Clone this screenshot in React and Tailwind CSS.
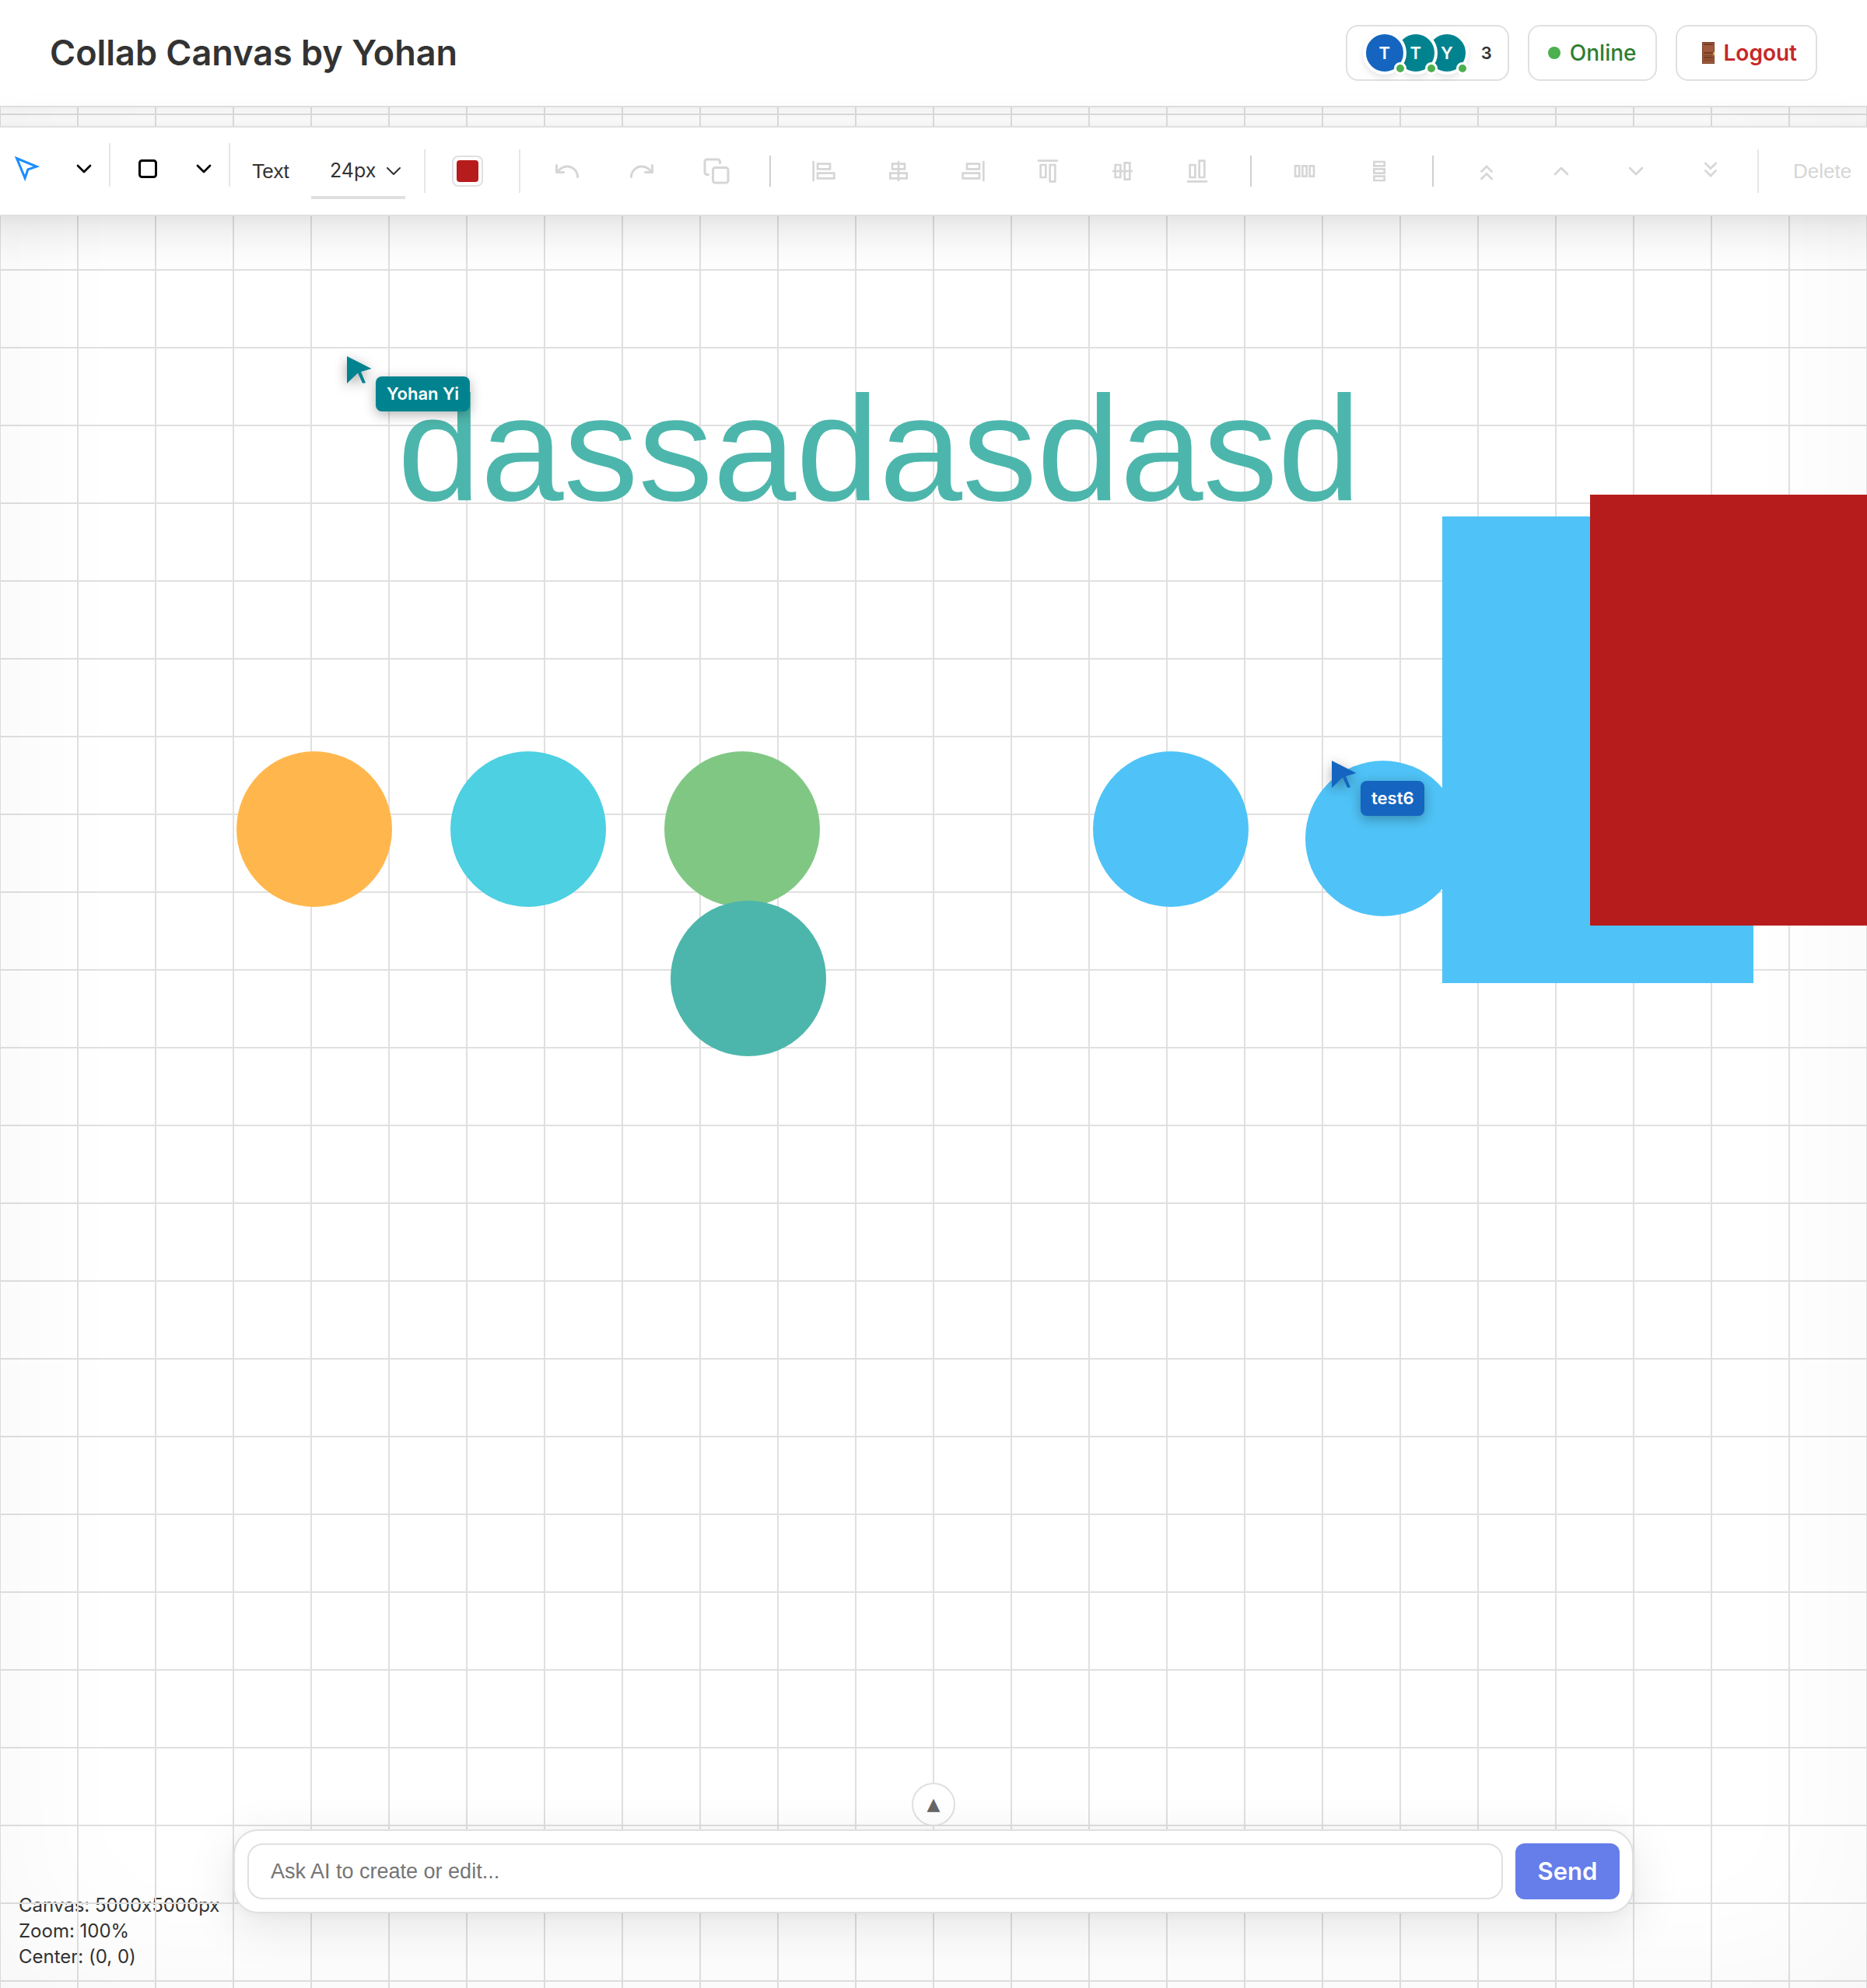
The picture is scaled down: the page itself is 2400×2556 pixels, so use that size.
import React from 'react';
import { Undo, Redo, ChevronDown, ChevronUp } from 'lucide-react';

const people = [
  { initial: 'T', color: 'bg-[#1565c0]', layer: 'z-30' },
  { initial: 'T', color: 'bg-[#00838f]', layer: 'z-20' },
  { initial: 'Y', color: 'bg-[#00838f]', layer: 'z-10' },
];

const circles = [
  { left: 304, top: 966, color: 'bg-[#ffb74d]' },
  { left: 579, top: 966, color: 'bg-[#4dd0e1]' },
  { left: 854, top: 966, color: 'bg-[#81c784]' },
  { left: 1405, top: 966, color: 'bg-[#4fc3f7]' },
  { left: 1678, top: 978, color: 'bg-[#4fc3f7]' },
  { left: 862, top: 1158, color: 'bg-[#4db6ac]' },
];

function Glyph({ children, className = 'size-8' }) {
  return (
    <svg viewBox="0 0 24 24" className={className} fill="none" stroke="currentColor" strokeWidth="2" strokeLinecap="round" strokeLinejoin="round" aria-hidden="true">
      {children}
    </svg>
  );
}

const shapes = {
  copy: (
    <Glyph className="size-9">
      <rect x="9" y="9" width="13" height="13" rx="2" />
      <path d="M5 15H4a2 2 0 0 1-2-2V4a2 2 0 0 1 2-2h9a2 2 0 0 1 2 2v1" />
    </Glyph>
  ),
  left: (
    <Glyph>
      <path d="M2 3v18" />
      <path strokeLinejoin="miter" d="M6 5h12v5H6zM6 14h16v5H6z" />
    </Glyph>
  ),
  center: (
    <Glyph>
      <path d="M12 3v18" />
      <path strokeLinejoin="miter" d="M6 5h12v5H6zM4 14h16v5H4z" />
    </Glyph>
  ),
  right: (
    <Glyph>
      <path d="M22 3v18" />
      <path strokeLinejoin="miter" d="M6 5h12v5H6zM2 14h16v5H2z" />
    </Glyph>
  ),
  top: (
    <Glyph>
      <path d="M3 2h18" />
      <path strokeLinejoin="miter" d="M5 6h5v12H5zM14 6h5v16h-5z" />
    </Glyph>
  ),
  middle: (
    <Glyph>
      <path d="M3 12h18" />
      <path strokeLinejoin="miter" d="M5 6h5v12H5zM14 4h5v16h-5z" />
    </Glyph>
  ),
  bottom: (
    <Glyph>
      <path d="M3 22h18" />
      <path strokeLinejoin="miter" d="M5 6h5v12H5zM14 2h5v16h-5z" />
    </Glyph>
  ),
  spreadX: (
    <Glyph>
      <path strokeLinejoin="miter" d="M3 7h4v10H3zM10 7h4v10h-4zM17 7h4v10h-4z" />
    </Glyph>
  ),
  spreadY: (
    <Glyph>
      <path strokeLinejoin="miter" d="M7 3h10v4H7zM7 10h10v4H7zM7 17h10v4H7z" />
    </Glyph>
  ),
  front: (
    <Glyph>
      <path strokeLinejoin="miter" d="M17 12.5l-5-5-5 5M17 19.5l-5-5-5 5" />
    </Glyph>
  ),
  back: (
    <Glyph>
      <path strokeLinejoin="miter" d="M7 4.5l5 5 5-5M7 11.5l5 5 5-5" />
    </Glyph>
  ),
};

function Tool({ label, children }) {
  return (
    <button type="button" aria-label={label} disabled className="flex h-20 w-24 shrink-0 items-center justify-center text-[#d6d6d6]">
      {children}
    </button>
  );
}

function Divider() {
  return <div className="h-14 w-0.5 shrink-0 bg-[#e6e6e6]" />;
}

function ShortDivider() {
  return <div className="mx-5 h-10 w-0.5 shrink-0 bg-[#d0d0d0]" />;
}

function Door() {
  return (
    <svg viewBox="0 0 16 28" className="h-7 w-4" aria-hidden="true">
      <rect width="16" height="28" fill="#7d4229" />
      <rect x="1" y="1" width="14" height="26" fill="#a0593a" />
      <path d="M2 3h12M2 14h12M2 20h12" stroke="#6b3520" strokeWidth="1.5" />
      <path d="M2 16.5h11v2H2zM2 22h12v3H2z" fill="#8a4a2e" />
      <rect x="14" y="13" width="2" height="4" fill="#d4a62a" />
    </svg>
  );
}

function Cursor({ name, place, tone, fill }) {
  return (
    <div className={`absolute ${place}`}>
      <svg viewBox="0 0 32 36" className={`h-9 w-8 drop-shadow-[0_4px_8px_rgba(0,0,0,0.35)] ${fill}`} aria-hidden="true">
        <path fill="currentColor" d="M0 0l31.500 16-13.500 4 6 14.300-4 .5L14 21.500 0 35z" />
      </svg>
      <span className={`absolute left-[37px] top-[26px] flex h-[45px] items-center whitespace-nowrap rounded-lg px-3.5 text-[22px] font-semibold text-white shadow-[0_4px_16px_rgba(0,0,0,0.3)] ${tone}`}>
        {name}
      </span>
    </div>
  );
}

export default function App() {
  return (
    <div className="relative flex min-h-screen flex-col overflow-hidden bg-white font-['Inter','Noto_Sans',sans-serif] text-[#333]">
      <div className="absolute inset-0">
        <div className="absolute bottom-6 left-6 text-[24px] leading-[33px] [font-feature-settings:'calt'_0]">
          <p>Canvas: 5000x5000px</p>
          <p>Zoom: 100%</p>
          <p>Center: (0, 0)</p>
        </div>
        <div className="absolute inset-0 bg-[linear-gradient(to_right,#e0e0e0_2px,transparent_2px),linear-gradient(to_bottom,#e0e0e0_2px,transparent_2px)] bg-[length:100px_100px] bg-[position:-1px_46px]" />
        <div className="pointer-events-none absolute inset-0 shadow-[inset_0_0_200px_rgba(0,0,0,0.04)]" />
        <p className="absolute left-[511px] top-[481px] whitespace-nowrap font-['Liberation_Sans',Arial,sans-serif] text-[192px] leading-none text-[#4db6ac]">
          dassadasdasd
        </p>
        {circles.map((c) => (
          <div key={`${c.left}-${c.top}`} className={`absolute size-[200px] rounded-full ${c.color}`} style={{ left: c.left, top: c.top }} />
        ))}
        <div className="absolute left-[1854px] top-[664px] h-[600px] w-[400px] bg-[#4fc3f7]" />
        <div className="absolute left-[2044px] top-[636px] h-[554px] w-[400px] bg-[#b71c1c]" />
        <Cursor name="Yohan Yi" place="left-[446px] top-[458px]" tone="bg-[#00838f]" fill="text-[#00838f]" />
        <Cursor name="test6" place="left-[1712px] top-[978px]" tone="bg-[#1565c0]" fill="text-[#1565c0]" />
      </div>

      <header className="relative flex h-[138px] shrink-0 items-center justify-between border-b-2 border-[#e0e0e0] bg-white px-16 shadow-[0_4px_16px_rgba(0,0,0,0.06)]">
        <h1 className="text-[45px] font-semibold">Collab Canvas by Yohan</h1>
        <div className="flex items-center gap-6">
          <div className="flex h-[72px] items-center gap-4 rounded-2xl border-2 border-[#e0e0e0] px-5">
            <div className="flex -space-x-4">
              {people.map((p, i) => (
                <div key={i} className={`relative flex size-14 items-center justify-center rounded-full border-4 border-white text-[22px] font-semibold text-white shadow-[0_4px_8px_rgba(0,0,0,0.1)] ${p.color} ${p.layer}`}>
                  {p.initial}
                  <span className="absolute -bottom-1 -right-1 size-4 rounded-full border-[3px] border-white bg-[#4caf50]" />
                </div>
              ))}
            </div>
            <span className="text-[22px] font-semibold">3</span>
          </div>
          <div className="flex h-[72px] items-center gap-3 rounded-2xl border-2 border-[#e0e0e0] px-6 text-[28px] font-medium text-[#2e7d32]">
            <span className="size-4 rounded-full bg-[#4caf50]" />
            Online
          </div>
          <button type="button" className="flex h-[72px] items-center gap-3 rounded-2xl border-2 border-[#e0e0e0] pl-8 pr-6 text-[28px] font-semibold text-[#c62828]">
            <Door />
            Logout
          </button>
        </div>
      </header>

      <div role="toolbar" aria-label="Canvas tools" className="relative -mx-8 mt-6 flex h-[116px] shrink-0 items-center border-y-2 border-[#e0e0e0] bg-white px-8 font-['Liberation_Sans',Arial,sans-serif] text-[26px] shadow-[0_16px_64px_rgba(0,0,0,0.12),0_4px_16px_rgba(0,0,0,0.03)]">
        <div className="mb-4 flex h-14 shrink-0 items-center border-r-2 border-[#e6e6e6] pr-2 pt-2.5 text-black">
          <button type="button" aria-label="Select" className="flex w-[84px] items-center justify-center pr-3.5 text-[#1a8cff]">
            <Glyph className="size-9">
              <path strokeLinejoin="miter" d="M3 3l7.070 16.970 2.510-7.390 7.390-2.510L3 3z" />
            </Glyph>
          </button>
          <button type="button" aria-label="Select options" className="flex w-12 items-center justify-center">
            <ChevronDown className="size-8" />
          </button>
        </div>
        <div className="mb-4 flex h-14 shrink-0 items-center border-r-2 border-[#e6e6e6] pr-2 pt-2.5 text-black">
          <button type="button" aria-label="Rectangle" className="flex w-24 items-center justify-center">
            <Glyph className="size-9">
              <rect x="5" y="5" width="14" height="14" rx="2" />
            </Glyph>
          </button>
          <button type="button" aria-label="Shape options" className="flex w-12 items-center justify-center">
            <ChevronDown className="size-8" />
          </button>
        </div>
        <button type="button" className="h-[72px] w-[104px] shrink-0 text-center">Text</button>
        <div className="relative h-[72px] w-[121px] shrink-0">
          <select aria-label="Font size" className="h-[72px] w-full appearance-none border-b-4 border-[#e0e0e0] bg-transparent pl-6 pt-1 font-['Inter','Noto_Sans',sans-serif] text-[25px]">
            <option>24px</option>
          </select>
          <ChevronDown strokeWidth={1.5} className="pointer-events-none absolute -right-px top-5 size-8" />
        </div>
        <div className="ml-6" />
        <Divider />
        <label className="ml-[34px] mr-[46px] block size-10 shrink-0 rounded-lg border-2 border-[#e0e0e0] p-1">
          <span className="block size-7 rounded-sm bg-[#b71c1c]" />
          <input type="color" aria-label="Fill colour" defaultValue="#b71c1c" className="sr-only" />
        </label>
        <Divider />
        <div className="ml-3" />
        <Tool label="Undo"><Undo className="size-9" /></Tool>
        <Tool label="Redo"><Redo className="size-9" /></Tool>
        <Tool label="Duplicate">{shapes.copy}</Tool>
        <ShortDivider />
        <Tool label="Align left">{shapes.left}</Tool>
        <Tool label="Align centre">{shapes.center}</Tool>
        <Tool label="Align right">{shapes.right}</Tool>
        <Tool label="Align top">{shapes.top}</Tool>
        <Tool label="Align middle">{shapes.middle}</Tool>
        <Tool label="Align bottom">{shapes.bottom}</Tool>
        <ShortDivider />
        <Tool label="Distribute horizontally">{shapes.spreadX}</Tool>
        <Tool label="Distribute vertically">{shapes.spreadY}</Tool>
        <ShortDivider />
        <Tool label="Bring to front">{shapes.front}</Tool>
        <Tool label="Bring forward"><ChevronUp className="size-8" /></Tool>
        <Tool label="Send backward"><ChevronDown className="size-8" /></Tool>
        <Tool label="Send to back">{shapes.back}</Tool>
        <div className="ml-3" />
        <Divider />
        <button type="button" disabled className="h-[72px] flex-1 pl-11 text-left text-[#d6d6d6]">Delete</button>
      </div>

      <main className="flex-1" />

      <footer className="relative mx-auto mb-24 flex w-3/4 flex-col items-center gap-1">
        <button type="button" aria-label="Expand assistant" className="flex size-14 items-center justify-center rounded-full border-2 border-[#e0e0e0] bg-white font-['DejaVu_Sans',sans-serif] text-[22px] leading-none text-[#666]">
          ▲
        </button>
        <form className="flex w-full gap-4 rounded-[32px] border-2 border-[#e0e0e0] bg-white p-4 shadow-[0_16px_64px_rgba(0,0,0,0.1),0_4px_16px_rgba(0,0,0,0.03)]" onSubmit={(e) => e.preventDefault()}>
          <input aria-label="Ask AI" placeholder="Ask AI to create or edit..." className="h-[72px] min-w-0 flex-1 rounded-[20px] border-2 border-[#e0e0e0] px-7 font-['Liberation_Sans',Arial,sans-serif] text-[27px] placeholder:text-[#757575]" />
          <button type="submit" className="h-[72px] w-[134px] rounded-xl bg-[#667eea] text-[31px] font-semibold text-white">Send</button>
        </form>
      </footer>
    </div>
  );
}
